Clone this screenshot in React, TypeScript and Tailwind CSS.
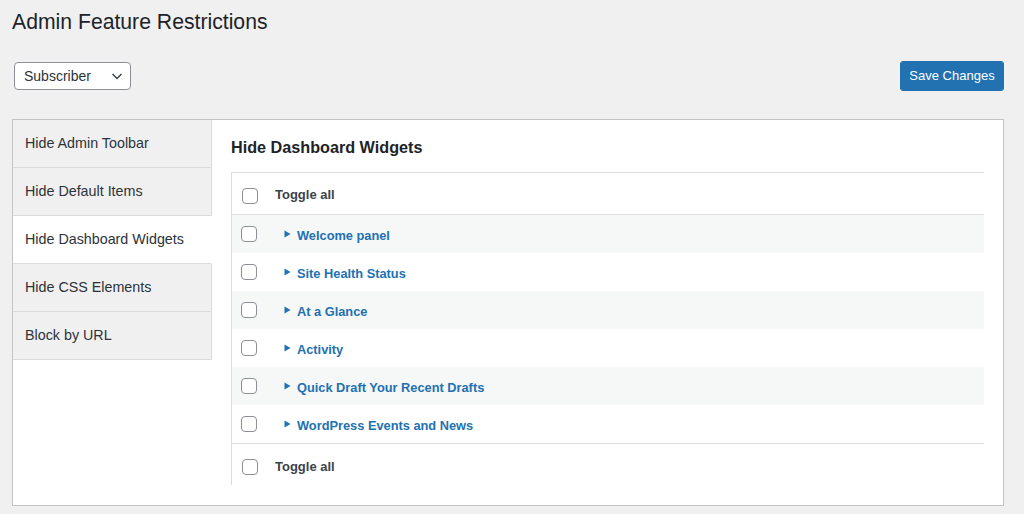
import React from "react";

const tabs = [
  "Hide Admin Toolbar",
  "Hide Default Items",
  "Hide Dashboard Widgets",
  "Hide CSS Elements",
  "Block by URL",
];

const widgets = [
  "Welcome panel",
  "Site Health Status",
  "At a Glance",
  "Activity",
  "Quick Draft Your Recent Drafts",
  "WordPress Events and News",
];

function Box() {
  return (
    <span className="block w-4 h-4 shrink-0 rounded-[4px] border border-[#8c8f94] bg-white" />
  );
}

function Triangle() {
  return (
    <svg width="7" height="8" viewBox="0 0 7 8" className="shrink-0">
      <path d="M0.5 0.5 L6.5 4 L0.5 7.5 Z" fill="#2271b1" />
    </svg>
  );
}

export default function App() {
  return (
    <div
      className="min-h-screen bg-[#f0f0f1] pl-3 pr-5 pt-[9px] text-[#1d2327]"
      style={{ fontFamily: '"Liberation Sans", Arial, sans-serif' }}
    >
      <h1 className="text-[21.2px] leading-[26px] font-normal text-[#1d2327]">
        Admin Feature Restrictions
      </h1>

      <div className="mt-[26px] flex items-center justify-between h-[30px]">
        <div className="ml-[2px] flex items-center justify-between w-[117px] h-[28px] rounded-[4px] border border-[#8c8f94] bg-white pl-[9px] pr-[6px] text-[14px] text-[#2c3338]">
          <span>Subscriber</span>
          <svg width="14" height="14" viewBox="0 0 14 14">
            <path d="M2.5 5 L7 9.5 L11.5 5" fill="none" stroke="#3c434a" strokeWidth="1.5" />
          </svg>
        </div>
        <button className="h-[30px] w-[104px] rounded-[3px] border border-[#2271b1] bg-[#2271b1] text-[13px] text-white">
          Save Changes
        </button>
      </div>

      <div className="mt-[28px] flex h-[387px] border border-[#c3c4c7] bg-white">
        <div className="w-[199px] shrink-0 flex flex-col">
          {tabs.map((t, i) => {
            const active = i === 2;
            return (
              <div
                key={t}
                className={
                  "h-[48px] flex items-center pl-3 text-[14.3px] text-[#2c3338] border-b border-[#dcdcde] " +
                  (active
                    ? "bg-white border-r border-r-white"
                    : "bg-[#f0f0f1] border-r border-r-[#dcdcde]")
                }
              >
                {t}
              </div>
            );
          })}
        </div>

        <div className="flex-1 pl-[19px] pr-[19px] pt-[17px]">
          <h2 className="text-[16.2px] leading-[20px] font-bold text-[#1d2327]">
            Hide Dashboard Widgets
          </h2>
          <div className="mt-[15px] border-l border-t border-[#dcdcde]">
            <div className="h-[42px] flex items-center pl-[10px] border-b border-[#dcdcde]">
              <span className="mt-[4px]"><Box /></span>
              <span className="ml-[17px] mt-[2px] text-[13px] font-bold text-[#3c434a]">Toggle all</span>
            </div>
            {widgets.map((w, i) => (
              <div
                key={w}
                className={
                  "h-[38px] flex items-center pl-[9px] " +
                  (i % 2 === 0 ? "bg-[#f6f7f7]" : "bg-white")
                }
              >
                <Box />
                <span className="ml-[27px]"><Triangle /></span>
                <span className="ml-[6px] mt-[4px] text-[12.8px] font-bold text-[#2271b1]">{w}</span>
              </div>
            ))}
            <div className="h-[42px] flex items-center pl-[10px] border-t border-[#dcdcde]">
              <span className="mt-[4px]"><Box /></span>
              <span className="ml-[17px] mt-[4px] text-[13px] font-bold text-[#3c434a]">Toggle all</span>
            </div>
          </div>
        </div>
      </div>
    </div>
  );
}
